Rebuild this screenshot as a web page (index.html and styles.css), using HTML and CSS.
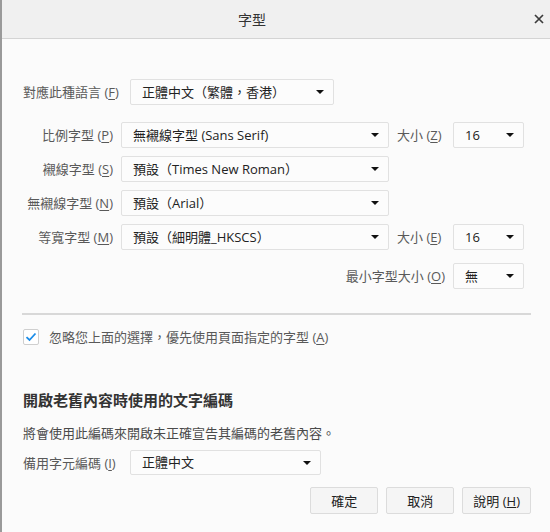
FILE: index.html
```html
<!DOCTYPE html>
<html lang="zh-Hant">
<head>
    <meta charset="UTF-8">
    <meta name="viewport" content="width=device-width, initial-scale=1.0">
    <title>字型</title>
    <link rel="stylesheet" href="styles.css">
</head>
<body>
    <div class="dialog">
        <div class="titlebar">
            <span class="title">字型</span>
            <span class="close">
                <svg width="10" height="10" viewBox="0 0 10 10">
                    <path d="M1 1 L9 9 M9 1 L1 9" stroke="#3c3c3c" stroke-width="1.7" fill="none"/>
                </svg>
            </span>
        </div>

        <div class="content">
            <div class="lang-row">
                <label class="label">對應此種語言 (<u>F</u>)</label>
                <div class="dropdown lang">正體中文（繁體，香港）</div>
            </div>

            <div class="font-grid">
                <label class="label">比例字型 (<u>P</u>)</label>
                <div class="dropdown">無襯線字型 (Sans Serif)</div>
                <label class="label size-label">大小 (<u>Z</u>)</label>
                <div class="dropdown size">16</div>

                <label class="label">襯線字型 (<u>S</u>)</label>
                <div class="dropdown">預設（Times New Roman）</div>
                <span></span><span></span>

                <label class="label">無襯線字型 (<u>N</u>)</label>
                <div class="dropdown">預設（Arial）</div>
                <span></span><span></span>

                <label class="label">等寬字型 (<u>M</u>)</label>
                <div class="dropdown">預設（細明體_HKSCS）</div>
                <label class="label size-label">大小 (<u>E</u>)</label>
                <div class="dropdown size">16</div>

                <label class="label min-label">最小字型大小 (<u>O</u>)</label>
                <div class="dropdown size min-size">無</div>
            </div>

            <hr class="separator">

            <div class="check-row">
                <span class="checkbox">
                    <svg width="12" height="10" viewBox="0 0 12 10">
                        <path d="M1.5 5.2 L4.5 8 L10.5 1.5" stroke="#1a8ce8" stroke-width="1.8" fill="none"/>
                    </svg>
                </span>
                <label class="label">忽略您上面的選擇，優先使用頁面指定的字型 (<u>A</u>)</label>
            </div>

            <h3 class="section-title">開啟老舊內容時使用的文字編碼</h3>
            <p class="description">將會使用此編碼來開啟未正確宣告其編碼的老舊內容。</p>

            <div class="lang-row encoding-row">
                <label class="label">備用字元編碼 (<u>I</u>)</label>
                <div class="dropdown encoding">正體中文</div>
            </div>

            <div class="buttons">
                <button>確定</button>
                <button>取消</button>
                <button>說明 (<u>H</u>)</button>
            </div>
        </div>
    </div>
</body>
</html>
```

FILE: styles.css
```css
body {
    margin: 0;
    font-family: "Open Sans", "Noto Sans CJK TC", sans-serif;
    font-size: 13px;
    color: #333;
}
.dialog {
    width: 550px;
    height: 532px;
    box-sizing: border-box;
    background-color: #fbfbfb;
    border-left: 2px solid #9a9a9a;
    overflow: hidden;
}
.titlebar {
    display: flex;
    align-items: center;
    height: 38px;
    background-color: #f0f0f0;
    border-bottom: 1px solid #d4d4d4;
}
.title {
    flex: 1;
    text-align: center;
    font-size: 14px;
    color: #333;
}
.close {
    width: 48px;
    box-sizing: border-box;
    display: flex;
    justify-content: flex-end;
    padding-right: 6px;
}
.content {
    padding: 40px 19px 0 20px;
}
.label {
    color: #595959;
    line-height: 18px;
    white-space: nowrap;
}
.label u {
    text-decoration-thickness: 1px;
    text-underline-offset: 2px;
}

/* dropdown boxes */
.dropdown {
    position: relative;
    box-sizing: border-box;
    height: 26px;
    line-height: 24px;
    padding: 0 24px 0 11px;
    background-color: #fcfcfc;
    border: 1px solid #e1e1e1;
    border-radius: 2px;
    color: #222;
    white-space: nowrap;
}
.dropdown::after {
    content: "";
    position: absolute;
    right: 9px;
    top: 10px;
    border-left: 4px solid transparent;
    border-right: 4px solid transparent;
    border-top: 4px solid #111;
}

.lang-row {
    display: flex;
    align-items: center;
    gap: 8px;
    padding-left: 1px;
}
.lang-row .label {
    width: 99px;
}
.lang {
    width: 204px;
}

.font-grid {
    display: grid;
    grid-template-columns: 91px 268px 48px 71px;
    column-gap: 8px;
    row-gap: 8px;
    align-items: center;
    margin-top: 17px;
}
.font-grid .label {
    text-align: right;
}
.font-grid .size-label {
    text-align: left;
}
.min-label {
    grid-column: 1 / 4;
    margin-top: 5px;
}
.min-size {
    margin-top: 5px;
}

.separator {
    border: none;
    border-top: 2px solid #d8d8d8;
    margin: 24px 0 0 0;
}

.check-row {
    display: flex;
    align-items: center;
    gap: 10px;
    margin-top: 13px;
    padding-left: 1px;
}
.checkbox {
    width: 16px;
    height: 16px;
    box-sizing: border-box;
    border: 1px solid #cfcfcf;
    border-radius: 2px;
    background-color: #fff;
    display: flex;
    align-items: center;
    justify-content: center;
}

.section-title {
    margin: 44px 0 0 1px;
    font-size: 15px;
    line-height: 20px;
    font-weight: bold;
    color: #333;
}
.description {
    margin: 14px 0 0 1px;
    line-height: 18px;
    color: #4a4a4a;
}

.encoding-row {
    margin-top: 8px;
}
.encoding {
    width: 191px;
    height: 25px;
    line-height: 23px;
}

.buttons {
    display: flex;
    justify-content: flex-end;
    gap: 8px;
    margin-top: 12px;
}
button {
    font-family: inherit;
    font-size: 13px;
    color: #222;
    height: 27px;
    min-width: 68px;
    padding: 0 10px;
    background-color: #f5f5f5;
    border: 1px solid #dcdcdc;
    border-radius: 2px;
}
```
